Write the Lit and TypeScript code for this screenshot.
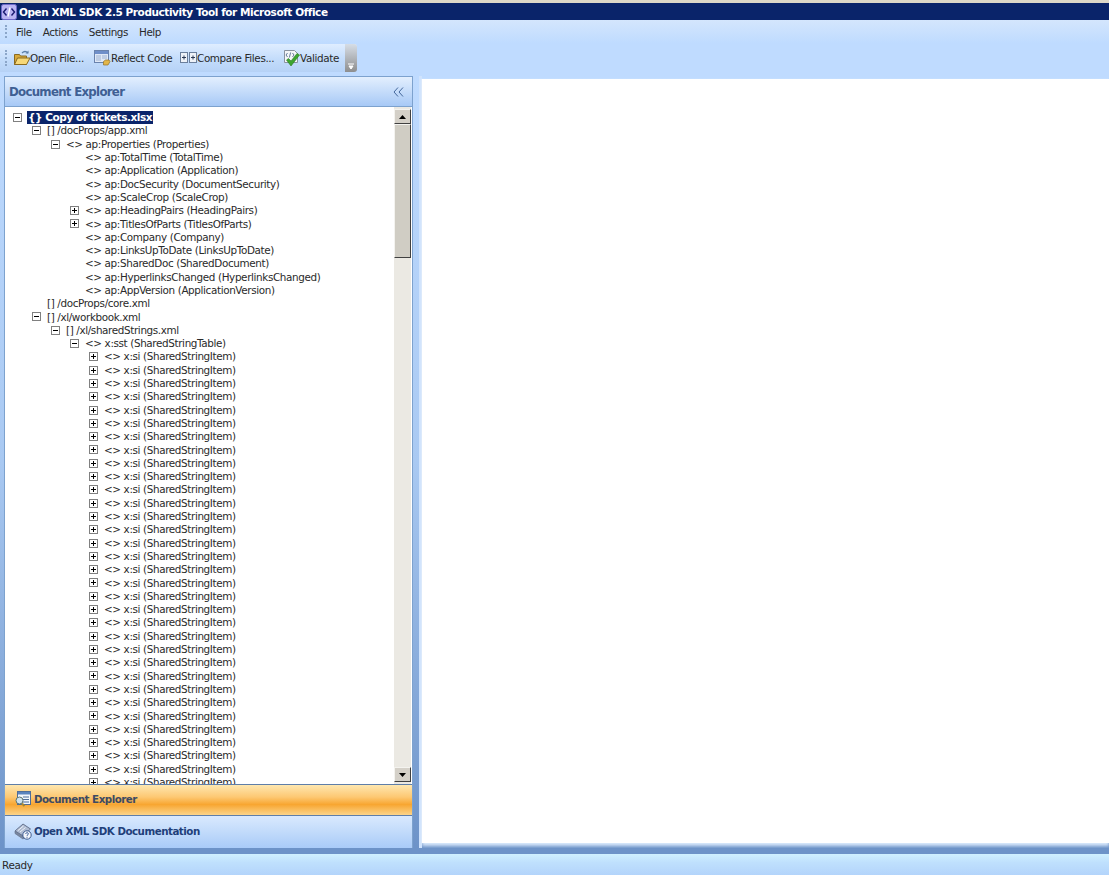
import { LitElement, html, css } from "lit";
import { customElement } from "lit/decorators.js";

type Row = { level: number; exp?: "+" | "-"; text: string; root?: boolean };

const rows: Row[] = [
  { level: 0, exp: "-", text: "{} Copy of tickets.xlsx", root: true },
  { level: 1, exp: "-", text: "[] /docProps/app.xml" },
  { level: 2, exp: "-", text: "<> ap:Properties (Properties)" },
  { level: 3, text: "<> ap:TotalTime (TotalTime)" },
  { level: 3, text: "<> ap:Application (Application)" },
  { level: 3, text: "<> ap:DocSecurity (DocumentSecurity)" },
  { level: 3, text: "<> ap:ScaleCrop (ScaleCrop)" },
  { level: 3, exp: "+", text: "<> ap:HeadingPairs (HeadingPairs)" },
  { level: 3, exp: "+", text: "<> ap:TitlesOfParts (TitlesOfParts)" },
  { level: 3, text: "<> ap:Company (Company)" },
  { level: 3, text: "<> ap:LinksUpToDate (LinksUpToDate)" },
  { level: 3, text: "<> ap:SharedDoc (SharedDocument)" },
  { level: 3, text: "<> ap:HyperlinksChanged (HyperlinksChanged)" },
  { level: 3, text: "<> ap:AppVersion (ApplicationVersion)" },
  { level: 1, text: "[] /docProps/core.xml" },
  { level: 1, exp: "-", text: "[] /xl/workbook.xml" },
  { level: 2, exp: "-", text: "[] /xl/sharedStrings.xml" },
  { level: 3, exp: "-", text: "<> x:sst (SharedStringTable)" },
  ...Array.from({ length: 33 }, () => ({ level: 4, exp: "+" as const, text: "<> x:si (SharedStringItem)" })),
];

const expander = (kind: "+" | "-") => html`<svg class="exp" width="9" height="9" viewBox="0 0 9 9">
  <rect x=".5" y=".5" width="8" height="8" fill="#fff" stroke="#808080"/>
  <path d="M2 4.5h5${kind === "+" ? "M4.5 2v5" : ""}" stroke="#000" fill="none"/>
</svg>`;

const appIcon = html`<svg width="16" height="16" viewBox="0 0 16 16">
  <rect x=".5" y=".5" width="15" height="15" rx="2" fill="#b9b4f2" stroke="#6d68c8"/>
  <path d="M5.5 4.5 2.5 8l3 3.5M10.5 4.5l3 3.5-3 3.5" fill="none" stroke="#1a1a70" stroke-width="1.4"/>
  <path d="M9 3.5 7 12.5" stroke="#fff" stroke-width="1.3"/>
</svg>`;

const folderIcon = html`<svg class="tight" width="18" height="18" viewBox="0 0 18 18">
  <path d="M1.5 5.5h5l1 1.5h6v8.5h-12z" fill="#d9a93a" stroke="#8a6a20"/>
  <path d="M1.5 15.5 4.5 9h12.5l-3.5 6.5z" fill="#f7d878" stroke="#8a6a20"/>
  <path d="M9 4c2-2 4-2 6 0" fill="none" stroke="#5b7fa8" stroke-width="1.2"/>
  <path d="m15.5 1.5v3h-3z" fill="#5b7fa8"/>
</svg>`;

const reflectIcon = html`<svg width="17" height="18" viewBox="0 0 17 18">
  <rect x=".5" y="1.5" width="14" height="12" fill="#dfe8f6" stroke="#6a83ad"/>
  <path d="M1 2h13v3H1z" fill="#6f8fca"/>
  <path d="M2 7h5M2 9h5M2 11h5M8 7h5M8 9h5" stroke="#9db2d2"/>
  <path d="M9.5 16v-3.5l2-1.5h3.5l1 1.5-2 3.5z" fill="#e2b64a" stroke="#93712a" stroke-width=".7"/>
</svg>`;

const compareIcon = html`<svg width="17" height="12" viewBox="0 0 17 12">
  <rect x=".5" y=".5" width="7" height="10" fill="#eef2f8" stroke="#6b7f9c"/>
  <rect x="9.5" y=".5" width="7" height="10" fill="#eef2f8" stroke="#6b7f9c"/>
  <path d="M2 5.5h4M4 3.5v4M11 5.5h4M13 3.5v4" stroke="#2c3a55"/>
</svg>`;

const validateIcon = html`<svg class="tight" width="18" height="18" viewBox="0 0 18 18">
  <path d="M1.5 1.5h10l3 3v9h-13z" fill="#f5f6f8" stroke="#8a93a0"/>
  <path d="M4.5 4 3 6l1.5 2M9.5 4 11 6 9.5 8M7.6 3.5 6.4 8.5" fill="none" stroke="#405a80" stroke-width=".8"/>
  <path d="M3.5 11l2-1.5 2.5 2.5 6-7.5 2.5 1.5L8 17z" fill="#3da52f" stroke="#2a7a20" stroke-width=".6"/>
</svg>`;

const explorerIcon = html`<svg width="18" height="18" viewBox="0 0 18 18">
  <rect x="3.5" y="1.5" width="13" height="13" fill="#f2f6fc" stroke="#4f6d99"/>
  <path d="M4 2h12v2.5H4z" fill="#5b83bd"/>
  <path d="M9 7h6M9 9.5h6M9 12h6" stroke="#4f6d99"/>
  <circle cx="5.5" cy="10.5" r="3.5" fill="#cfe2ee" stroke="#5d7470"/>
  <path d="m8 13.5 2.5 2.5" stroke="#a8882e" stroke-width="2"/>
</svg>`;

const docIcon = html`<svg width="18" height="18" viewBox="0 0 18 18">
  <path d="M1 9 9 2l7.5 5L9 14z" fill="#aebbd2" stroke="#66738e"/>
  <path d="M1 9v2.5L9 17l3-2.5L9 14z" fill="#78869f" stroke="#66738e" stroke-width=".7"/>
  <path d="M4 8.5 9.5 4M6 10l5.5-4.5" stroke="#eef2f8"/>
  <circle cx="13" cy="13" r="4.2" fill="#f3f6fb" stroke="#3c5a8f"/>
  <path d="M11.6 11.8c.3-1.5 2.8-1.5 2.8 0 0 1-1.4 1-1.4 2.1M13 14.8v1" fill="none" stroke="#2c4f8f" stroke-width=".9"/>
</svg>`;

@customElement("app-root")
export class AppRoot extends LitElement {
  static styles = css`
    :host { display: block; width: 1109px; height: 875px; overflow: hidden; }
    * { box-sizing: border-box; }
    .app {
      width: 1109px; height: 875px; display: flex; flex-direction: column;
      background: #bfdbff; color: #2a2a2a;
      font-family: "DejaVu Sans", Verdana, sans-serif; font-size: 10.4px; letter-spacing: -0.37px;
    }
    .top-edge { height: 3px; background: #ded8c8; flex: none; }
    .title {
      height: 17px; flex: none; background: #0a246a; color: #fff; display: flex; align-items: center;
      gap: 2px; padding-left: 1px; font-weight: 700; font-size: 10.5px; letter-spacing: -0.43px;
    }
    .menubar {
      height: 23px; flex: none; display: flex; align-items: center; gap: 11px; padding-left: 16px;
      background: linear-gradient(#d4e6fd, #bfdbff); position: relative; letter-spacing: -0.42px;
    }
    .toolstrip { flex: none; height: 33px; padding-top: 1px; background: #bfdbff; }
    .toolbar {
      width: 357px; height: 28px; display: flex; align-items: center; padding-left: 13px; position: relative;
      background: linear-gradient(#dfedff, #c3dcfb 55%, #b6d2f6);
      border-radius: 0 3px 3px 0;
    }
    .tool { display: flex; align-items: center; white-space: nowrap; }
    .tool svg { flex: none; }
    .tool .tight { margin-right: -1px; }
    .t1 { width: 81px; } .t2 { width: 86px; } .t3 { width: 103px; } .t4 { width: 60px; }
    .grip { position: absolute; top: 6px; bottom: 6px; width: 2px; border-left: 2px dotted #8ba6c9; }
    .grip.tb { left: 5px; }
    .grip.mb { left: 5px; top: 5px; bottom: 5px; }
    .overflow {
      position: absolute; right: 0; top: 0; bottom: 0; width: 12px; border-radius: 0 3px 3px 0;
      background: linear-gradient(#d6dde6, #8e8e8e);
      display: flex; align-items: flex-end; justify-content: center; padding-bottom: 3px;
    }
    .main { flex: 1; min-height: 0; display: flex; padding-left: 4px; background: linear-gradient(#bfdbff, #a9c9f2 50%, #6d93c8); }
    .panel {
      width: 409px; height: 772px; flex: none; display: flex; flex-direction: column;
      border: 1px solid #7da2ce; border-bottom: none; background: #fff;
    }
    .phead {
      height: 30px; flex: none; display: flex; align-items: center; justify-content: space-between;
      padding: 0 8px 0 4px; background: linear-gradient(#e3effe, #a7c9f6);
      border-bottom: 1px solid #7da2ce; color: #3f5f93; font-weight: 700; font-size: 11.8px; letter-spacing: -0.73px;
    }
    .tree-wrap { flex: 1; min-height: 0; display: flex; background: #fff; padding-right: 1px; }
    .tree { flex: 1; min-width: 0; overflow: hidden; padding-top: 3.5px; }
    .row { height: 13.3px; display: flex; align-items: center; white-space: pre; position: relative; }
    .exp-box { position: absolute; top: 2.5px; line-height: 0; }
    .sel { background: #0a246a; color: #fff; font-weight: 700; font-size: 10.5px; letter-spacing: -0.44px; padding: 0 1px; height: 13px; display: flex; align-items: center; }
    .scroll { width: 17px; flex: none; display: flex; flex-direction: column; background: #ebe9e3; padding-top: 2px; padding-bottom: 2px; }
    .sb-btn {
      height: 15px; flex: none; background: #d4d0c8; display: flex; align-items: center; justify-content: center;
      border: 1px solid; border-color: #f4f3ef #404040 #404040 #f4f3ef;
    }
    .thumb { height: 134px; flex: none; background: #d0cdc4; border: 1px solid; border-color: #f4f3ef #404040 #404040 #f4f3ef; }
    .track { flex: 1; }
    .navbtn {
      height: 32px; flex: none; display: flex; align-items: center; gap: 2px; padding: 0 0 2px 9px;
      font-weight: 700; font-size: 10.3px; letter-spacing: -0.5px;
    }
    .nav-active {
      background: linear-gradient(#fee7b0, #fdc873 40%, #f8a631 65%, #fcd48a);
      border-top: 1px solid #5f7ea8; border-bottom: 1px solid #5f7ea8; color: #3d4a63;
    }
    .nav-idle { background: linear-gradient(#d9e9fe, #c4dcfb 45%, #a9cbf8); color: #1f3f7a; }
    .splitter { width: 9px; flex: none; height: 772px; background: linear-gradient(90deg, transparent 66%, #cfe3fd 66%); }
    .right { flex: 1; height: 764px; margin-top: 3px; background: #fff; box-shadow: -1px 0 1px #dbe9fb, 0 3px 3px #d6e6fa; }
    .band { height: 6px; background: #6d93c8; flex: none; }
    .status {
      height: 21px; flex: none; background: linear-gradient(#cff0ff, #bfe0fd 40%, #b3d4fb);
      display: flex; align-items: center; padding-left: 2px;
    }
  `;

  private renderRow(r: Row) {
    const x = 12 + r.level * 19;
    return html`<div class="row" style="padding-left:${x + 11 - (r.root ? 1 : 0)}px">${
      r.exp ? html`<span class="exp-box" style="left:${x - 4}px">${expander(r.exp)}</span>` : ""
    }${r.root ? html`<span class="sel">${r.text}</span>` : html`<span>${r.text}</span>`}</div>`;
  }

  render() {
    return html`<div class="app">
      <div class="top-edge"></div>
      <div class="title">${appIcon}<span>Open XML SDK 2.5 Productivity Tool for Microsoft Office</span></div>
      <div class="menubar"><i class="grip mb"></i><span>File</span><span>Actions</span><span>Settings</span><span>Help</span></div>
      <div class="toolstrip">
        <div class="toolbar">
          <i class="grip tb"></i>
          <div class="tool t1">${folderIcon}<span>Open File...</span></div>
          <div class="tool t2">${reflectIcon}<span>Reflect Code</span></div>
          <div class="tool t3">${compareIcon}<span>Compare Files...</span></div>
          <div class="tool t4">${validateIcon}<span>Validate</span></div>
          <div class="overflow"><svg width="7" height="6" viewBox="0 0 7 6"><path d="M0 1h6M1 3h4l-2 3z" stroke="#fff" fill="#fff" stroke-width="1"/></svg></div>
        </div>
      </div>
      <div class="main">
        <div class="panel">
          <div class="phead"><span>Document Explorer</span>
            <svg width="11" height="10" viewBox="0 0 11 10"><path d="M5 .5 1 5l4 4.5M10 .5 6 5l4 4.5" fill="none" stroke="#45689c"/></svg>
          </div>
          <div class="tree-wrap">
            <div class="tree">${rows.map((r) => this.renderRow(r))}</div>
            <div class="scroll">
              <div class="sb-btn"><svg width="7" height="4" viewBox="0 0 7 4"><path d="M3.5 0 7 4H0z"/></svg></div>
              <div class="thumb"></div>
              <div class="track"></div>
              <div class="sb-btn"><svg width="7" height="4" viewBox="0 0 7 4"><path d="M3.5 4 7 0H0z"/></svg></div>
            </div>
          </div>
          <div class="navbtn nav-active">${explorerIcon}<span>Document Explorer</span></div>
          <div class="navbtn nav-idle">${docIcon}<span>Open XML SDK Documentation</span></div>
        </div>
        <div class="splitter"></div>
        <div class="right"></div>
      </div>
      <div class="band"></div>
      <div class="status">Ready</div>
    </div>`;
  }
}
